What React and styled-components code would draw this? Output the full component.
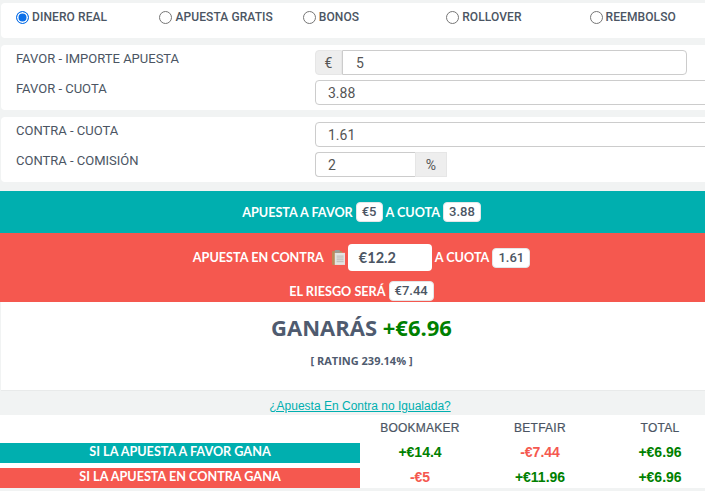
import React from 'react';
import styled, { createGlobalStyle } from 'styled-components';

const GlobalStyle = createGlobalStyle`
  html, body {
    margin: 0;
    padding: 0;
    width: 705px;
    height: 491px;
    overflow: hidden;
    background: #f1f3f3;
    font-family: Roboto, "Liberation Sans", sans-serif;
  }
`;

const TEAL = '#00afaf';
const RED = '#f5584f';

const options = ['DINERO REAL', 'APUESTA GRATIS', 'BONOS', 'ROLLOVER', 'REEMBOLSO'];

const rows = [
  { label: 'SI LA APUESTA A FAVOR GANA', bg: TEAL, values: [['+€14.4', true], ['-€7.44', false], ['+€6.96', true]] },
  { label: 'SI LA APUESTA EN CONTRA GANA', bg: RED, values: [['-€5', false], ['+€11.96', true], ['+€6.96', true]] },
];

function ClipboardIcon() {
  return (
    <svg width="13" height="17" viewBox="0 0 14 17" style={{ flex: 'none', margin: '0 0 0 5px' }}>
      <rect x="0" y="1.5" width="11" height="15" rx="1" fill="#b98a5a" />
      <rect x="3" y="3.5" width="11" height="13" fill="#e4e4e2" />
      <rect x="3" y="0.5" width="5.5" height="3" rx="0.8" fill="#9c9c98" />
      <path d="M5 7h7.5M5 9h7.5M5 11h7.5M5 13h7.5" stroke="#b9b9b6" strokeWidth="1" />
    </svg>
  );
}

export default function App() {
  return (
    <>
      <GlobalStyle />
      <Page>
        <RadioCard>
          {options.map((option, i) => (
            <RadioLabel key={option}>
              <RadioDot $checked={i === 0} />
              {option}
            </RadioLabel>
          ))}
        </RadioCard>

        <FormCard>
          <FormRow>
            <FieldLabel>FAVOR - IMPORTE APUESTA</FieldLabel>
            <InputGroup $width="372px">
              <Addon $side="left">€</Addon>
              <Field $joined="left" $indent="13px">5</Field>
            </InputGroup>
          </FormRow>
          <FormRow>
            <FieldLabel>FAVOR - CUOTA</FieldLabel>
            <InputGroup $width="405px">
              <Field>3.88</Field>
            </InputGroup>
          </FormRow>
        </FormCard>

        <FormCard>
          <FormRow>
            <FieldLabel>CONTRA - CUOTA</FieldLabel>
            <InputGroup $width="405px">
              <Field>1.61</Field>
            </InputGroup>
          </FormRow>
          <FormRow>
            <FieldLabel>CONTRA - COMISIÓN</FieldLabel>
            <InputGroup $width="132px">
              <Field $joined="right">2</Field>
              <Addon $side="right">%</Addon>
            </InputGroup>
          </FormRow>
        </FormCard>

        <FavorBand>
          APUESTA A FAVOR <Chip>€5</Chip> A CUOTA <Chip>3.88</Chip>
        </FavorBand>

        <ContraBand>
          <BandLine>
            APUESTA EN CONTRA
            <ClipboardIcon />
            <StakeBox>€12.2</StakeBox>
            A CUOTA <Chip>1.61</Chip>
          </BandLine>
          <BandLine>
            EL RIESGO SERÁ <Chip>€7.44</Chip>
          </BandLine>
        </ContraBand>

        <ResultCard>
          <Profit>
            GANARÁS <Green>+€6.96</Green>
          </Profit>
          <Rating>[ RATING 239.14% ]</Rating>
        </ResultCard>

        <LinkBar>
          <UnmatchedLink href="#">¿Apuesta En Contra no Igualada?</UnmatchedLink>
        </LinkBar>

        <Table>
          <HeadRow>
            <span />
            <HeadCell>BOOKMAKER</HeadCell>
            <HeadCell>BETFAIR</HeadCell>
            <HeadCell>TOTAL</HeadCell>
          </HeadRow>
          {rows.map((row) => (
            <BodyRow key={row.label}>
              <RowTitle $bg={row.bg}>{row.label}</RowTitle>
              {row.values.map(([value, positive], i) => (
                <Amount key={i} $positive={positive}>{value}</Amount>
              ))}
            </BodyRow>
          ))}
        </Table>
      </Page>
    </>
  );
}

const Page = styled.div`
  width: 720px;
  padding-top: 3px;
  color: #4b5563;
`;

const Card = styled.div`
  background: #fff;
  margin-left: 1px;
  border-radius: 4px 0 0 4px;
`;

const RadioCard = styled(Card)`
  height: 35px;
  box-sizing: border-box;
  padding: 6px 0 0 15px;
  display: grid;
  grid-template-columns: repeat(5, 143.4px);
  align-items: start;
`;

const RadioLabel = styled.label`
  display: flex;
  align-items: center;
  gap: 3px;
  height: 16px;
  font-size: 12px;
  font-weight: 500;
  letter-spacing: 0.1px;
  color: #4b5563;
`;

const RadioDot = styled.span`
  width: 13px;
  height: 13px;
  flex: none;
  border-radius: 50%;
  box-sizing: border-box;
  background: ${(p) => (p.$checked ? '#0b6fe8' : '#fff')};
  border: 1px solid ${(p) => (p.$checked ? '#0b6fe8' : '#767676')};
  box-shadow: ${(p) => (p.$checked ? 'inset 0 0 0 1.5px #fff' : 'none')};
`;

const FormCard = styled(Card)`
  margin-top: 7px;
  height: 65px;
  box-sizing: border-box;
  padding: 5px 0 0 15px;
  display: flex;
  flex-direction: column;
  gap: 5px;
`;

const FormRow = styled.div`
  display: grid;
  grid-template-columns: 299px 1fr;
  height: 25px;
`;

const FieldLabel = styled.div`
  font-size: 13px;
  line-height: 18px;
  color: #4b5563;
`;

const InputGroup = styled.div`
  display: flex;
  width: ${(p) => p.$width};
  height: 25px;
`;

const Field = styled.div`
  flex: 1;
  box-sizing: border-box;
  border: 1px solid #ccc;
  border-radius: ${(p) => (p.$joined === 'left' ? '0 4px 4px 0' : p.$joined === 'right' ? '4px 0 0 4px' : '4px')};
  ${(p) => (p.$joined === 'right' ? 'border-right: 0;' : '')}
  padding-left: ${(p) => p.$indent || '12px'};
  font-size: 14px;
  line-height: 25px;
  color: #555;
  background: #fff;
`;

const Addon = styled.div`
  width: ${(p) => (p.$side === 'left' ? '27px' : '32px')};
  box-sizing: border-box;
  flex: none;
  background: #eee;
  border: 1px solid #e6e6e6;
  border-radius: ${(p) => (p.$side === 'left' ? '4px 0 0 4px' : '0')};
  text-align: center;
  font-size: 14px;
  line-height: 25px;
  color: #555;
`;

const Band = styled.div`
  color: #fff;
  font-family: Lato, sans-serif;
  font-weight: 700;
  font-size: 12.65px;
  display: flex;
  align-items: center;
  justify-content: center;
  box-sizing: border-box;
  padding-left: 3px;
`;

const FavorBand = styled(Band)`
  margin-top: 9px;
  height: 42px;
  background: ${TEAL};
  gap: 3px;
`;

const ContraBand = styled(Band)`
  height: 69px;
  background: ${RED};
  flex-direction: column;
  justify-content: flex-start;
  padding-top: 11px;
  gap: 10px;
`;

const BandLine = styled.div`
  display: flex;
  align-items: center;
  gap: 3px;
  min-height: 20px;
`;

const Chip = styled.span`
  background: #fff;
  color: #4b5563;
  font-family: Roboto, sans-serif;
  font-size: 13px;
  font-weight: 500;
  line-height: 18px;
  padding: 0 5px;
  border: 1px solid #e3e6e8;
  border-radius: 4px;
`;

const StakeBox = styled.span`
  width: 84px;
  height: 27px;
  box-sizing: border-box;
  padding-left: 11px;
  background: #fff;
  color: #4b5563;
  font-size: 14.5px;
  font-weight: 700;
  line-height: 27px;
  border-radius: 4px;
`;

const ResultCard = styled.div`
  height: 89px;
  box-sizing: border-box;
  background: #fff;
  margin-left: 1px;
  border-bottom: 1px solid #e8eaea;
  font-family: "Open Sans", sans-serif;
  text-align: center;
  padding: 8px 0 0 2px;
`;

const Profit = styled.div`
  font-size: 22px;
  font-weight: 700;
  line-height: 34px;
  color: #4f5b6f;
`;

const Green = styled.span`
  color: #008000;
  font-weight: 700;
`;

const Rating = styled.div`
  margin-top: 10px;
  font-size: 11px;
  font-weight: 700;
  line-height: 14px;
  color: #4f5b6f;
`;

const LinkBar = styled.div`
  height: 24px;
  box-sizing: border-box;
  padding-top: 5px;
  display: flex;
  align-items: center;
  justify-content: center;
`;

const UnmatchedLink = styled.a`
  font-family: "Liberation Sans", sans-serif;
  font-size: 12px;
  color: ${TEAL};
  text-decoration: underline;
`;

const Table = styled.div`
  background: #fff;
  height: 73px;
  font-family: "Liberation Sans", sans-serif;
`;

const HeadRow = styled.div`
  display: grid;
  grid-template-columns: 360px repeat(3, 120px);
  height: 28px;
  align-items: start;
`;

const HeadCell = styled.div`
  text-align: center;
  font-size: 12px;
  line-height: 27px;
  letter-spacing: 0.25px;
  -webkit-text-stroke: 0.2px #4b5563;
  color: #4b5563;
`;

const BodyRow = styled.div`
  display: grid;
  grid-template-columns: 360px repeat(3, 120px);
  height: 20px;
  margin-bottom: 5px;
  align-items: center;
`;

const RowTitle = styled.div`
  height: 20px;
  background: ${(p) => p.$bg};
  color: #fff;
  font-family: Lato, sans-serif;
  font-weight: 700;
  font-size: 12.65px;
  line-height: 18px;
  text-align: center;
`;

const Amount = styled.div`
  text-align: center;
  font-size: 14px;
  font-weight: 700;
  margin-top: -2px;
  color: ${(p) => (p.$positive ? '#008000' : RED)};
`;
